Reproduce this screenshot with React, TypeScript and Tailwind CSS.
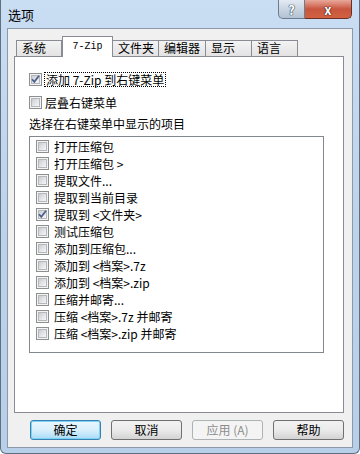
import React from 'react';

const items: { label: string; checked?: boolean }[] = [
  { label: '打开压缩包' },
  { label: '打开压缩包 >' },
  { label: '提取文件...' },
  { label: '提取到当前目录' },
  { label: '提取到 <文件夹>', checked: true },
  { label: '测试压缩包' },
  { label: '添加到压缩包...' },
  { label: '添加到 <档案>.7z' },
  { label: '添加到 <档案>.zip' },
  { label: '压缩并邮寄...' },
  { label: '压缩 <档案>.7z 并邮寄' },
  { label: '压缩 <档案>.zip 并邮寄' },
];

const tabs = [
  { label: '系统', w: 'w-[46px]' },
  { label: '7-Zip', w: 'w-[51px]', active: true },
  { label: '文件夹', w: 'w-[47px]' },
  { label: '编辑器', w: 'w-[48px]' },
  { label: '显示', w: 'w-[47px]' },
  { label: '语言', w: 'w-[47px]' },
];

const CheckBox: React.FC<{ checked?: boolean }> = ({ checked }) => (
  <span className="relative flex w-[13px] h-[13px] shrink-0 border border-[#8e8f8f] bg-[#f4f4f4] p-[1px]">
    <span className="w-full h-full border border-[#b4b8bd] bg-linear-to-br from-[#c9ccd1] via-[#e2e3e5] to-[#f7f7f7]" />
    {checked && (
      <svg className="absolute left-0 top-0" width="11" height="11" viewBox="0 0 11 11">
        <path d="M2 5.2 L4.3 7.8 L9 1.8" fill="none" stroke="#4a5f8f" strokeWidth="1.7" />
      </svg>
    )}
  </span>
);

const Button: React.FC<{ label: string; kind?: 'default' | 'disabled' }> = ({ label, kind }) => {
  let cls = 'border-[#707070] bg-linear-to-b from-[#f2f2f2] via-[#ebebeb] to-[#d3d3d3] text-black';
  if (kind === 'default') cls = 'border-[#3c7fb1] bg-linear-to-b from-[#eaf6fd] via-[#d9f0fc] to-[#a9dbf6] text-black shadow-[inset_0_0_0_1px_#7ad4f5]';
  if (kind === 'disabled') cls = 'border-[#adb2b5] bg-[#f4f4f4] text-[#8d8d8d]';
  return (
    <div className={`w-[71px] h-[20px] rounded-[3px] border flex items-center justify-center text-[12px] leading-none whitespace-pre ${cls}`}>
      {label}
    </div>
  );
};

export default function App() {
  return (
    <div className="w-[360px] h-[454px] flex flex-col bg-linear-to-b from-[#c9ddf3] via-[#bcd3ec] to-[#b7cfe9] border-l border-r border-b border-[#60707f] rounded-b-[6px] font-['Noto_Sans_CJK_SC',sans-serif] text-[12px] text-black overflow-hidden">
      {/* title bar */}
      <div className="relative h-[28px] shrink-0 pl-[7px] pt-[8px] leading-[13px] text-[13px]">
        选项
        <div className="absolute top-0 right-[7px] flex">
          <div className="w-[27px] h-[19px] border border-t-0 border-[#6c7d90] rounded-bl-[5px] bg-linear-to-b from-[#e3eaf2] via-[#c9d5e2] to-[#b2c2d4] flex items-center justify-center text-white font-bold text-[13px] [text-shadow:0_0_1px_#33414f,0_0_1px_#33414f,0_0_1px_#33414f]">
            ?
          </div>
          <div className="w-[47px] h-[19px] border border-l-0 border-t-0 border-[#6b2f27] rounded-br-[5px] bg-linear-to-b from-[#e8a89b] via-[#c8553f] to-[#d2613f] flex items-center justify-center text-white font-bold text-[13px] [text-shadow:0_0_1px_#3a1510,0_0_1px_#3a1510,0_0_1px_#3a1510]">
            x
          </div>
        </div>
      </div>

      {/* client area */}
      <div className="mx-[6px] h-[420px] shrink-0 border border-[#8d99a6] bg-[#f0f0f0] pl-[6px] pt-[7px] flex flex-col">
        <div className="flex h-[20px] items-end pl-[2px] relative z-10">
          {tabs.map(t =>
            t.active ? (
              <div
                key={t.label}
                className={`${t.w} h-[21px] -mb-px bg-white border border-b-0 border-[#898c95] flex items-center justify-center font-['Liberation_Mono',monospace] text-[10px] leading-none`}
              >
                {t.label}
              </div>
            ) : (
              <div
                key={t.label}
                className={`${t.w} h-[16px] bg-linear-to-b from-[#f3f3f3] to-[#e3e3e3] border border-b-0 border-[#898c95] -ml-px first:ml-0 flex items-end pl-[5px] pb-[1px] text-[12px] leading-[14px]`}
              >
                {t.label}
              </div>
            ),
          )}
        </div>

        <div className="w-[330px] h-[357px] border border-[#898c95] bg-white pl-[14px] pt-[15px] flex flex-col">
          <div className="flex items-center h-[15px]">
            <CheckBox checked />
            <span className="ml-[2px] border border-dotted border-black px-[1px] h-[15px] flex items-center leading-none">
              添加 7-Zip 到右键菜单
            </span>
          </div>
          <div className="flex items-center h-[15px] mt-[8px]">
            <CheckBox />
            <span className="ml-[3px] leading-none">层叠右键菜单</span>
          </div>
          <div className="mt-[6px] h-[16px] flex items-center leading-none">选择在右键菜单中显示的项目</div>
          <div className="mt-[4px] w-[295px] h-[217px] border border-[#828790] pt-[1px] pl-[6px] flex flex-col">
            {items.map(it => (
              <div key={it.label} className="h-[17px] flex items-center">
                <CheckBox checked={it.checked} />
                <span className="ml-[5px] leading-none whitespace-pre">{it.label}</span>
              </div>
            ))}
          </div>
        </div>

        <div className="mt-[7px] pl-[16px] flex gap-[10px]">
          <Button label="确定" kind="default" />
          <Button label="取消" />
          <Button label="应用 (A)" kind="disabled" />
          <Button label="帮助" />
        </div>
      </div>
    </div>
  );
}
